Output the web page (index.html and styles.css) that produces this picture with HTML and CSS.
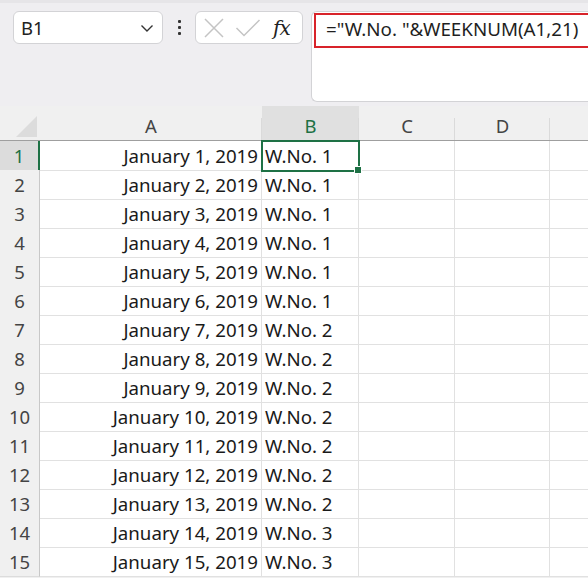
FILE: index.html
```html
<!DOCTYPE html>
<html>
<head>
<meta charset="utf-8">
<link rel="stylesheet" href="styles.css">
</head>
<body>
<div class="app">
  <div class="toolbar">
    <div class="namebox">
      <span class="ref">B1</span>
      <svg class="chev" width="14" height="10" viewBox="0 0 14 10"><path d="M1.5 2.5 L7 8 L12.5 2.5" fill="none" stroke="#333" stroke-width="1.4"/></svg>
    </div>
    <div class="dots"><i></i><i></i><i></i></div>
    <div class="fxbox">
      <svg class="ico" width="22" height="22" viewBox="0 0 22 22"><path d="M2 2 L20 20 M20 2 L2 20" stroke="#c4c4c4" stroke-width="1.5" fill="none"/></svg>
      <svg class="ico" width="26" height="22" viewBox="0 0 26 22"><path d="M1.5 11 L9 18.5 L24.5 3" stroke="#c4c4c4" stroke-width="1.5" fill="none"/></svg>
      <span class="fx">fx</span>
    </div>
    <div class="formula">
      <div class="hl">="W.No. "&amp;WEEKNUM(A1,21)</div>
    </div>
  </div>
  <div class="grid">
    <div class="corner"><span class="tri"></span></div>
    <div class="ch">A</div>
    <div class="ch sel">B</div>
    <div class="ch">C</div>
    <div class="ch">D</div>
    <div class="ch last"></div>
  </div>
  <div class="rows" id="rows"></div>
</div>
<script>
  var rows = [
    ["January 1, 2019","W.No. 1"],["January 2, 2019","W.No. 1"],["January 3, 2019","W.No. 1"],
    ["January 4, 2019","W.No. 1"],["January 5, 2019","W.No. 1"],["January 6, 2019","W.No. 1"],
    ["January 7, 2019","W.No. 2"],["January 8, 2019","W.No. 2"],["January 9, 2019","W.No. 2"],
    ["January 10, 2019","W.No. 2"],["January 11, 2019","W.No. 2"],["January 12, 2019","W.No. 2"],
    ["January 13, 2019","W.No. 2"],["January 14, 2019","W.No. 3"],["January 15, 2019","W.No. 3"]
  ];
  var html = "";
  rows.forEach(function(r, i){
    var s = i === 0;
    html += '<div class="row">' +
      '<div class="rh' + (s ? ' sel' : '') + '">' + (i+1) + '</div>' +
      '<div class="c a">' + r[0] + '</div>' +
      '<div class="c b' + (s ? ' active' : '') + '">' + r[1] + (s ? '<span class="handle"></span>' : '') + '</div>' +
      '<div class="c"></div><div class="c"></div><div class="c last"></div></div>';
  });
  document.getElementById("rows").innerHTML = html;
</script>
</body>
</html>
```
FILE: styles.css
```css
* { box-sizing: border-box; }
html, body { margin: 0; padding: 0; }
body {
  width: 588px; height: 578px; overflow: hidden;
  font-family: "Noto Sans", "Open Sans", sans-serif;
  color: #1f1f1f;
  background: #f0f0f0;
}
.app { width: 588px; height: 578px; overflow: hidden; }
.toolbar {
  height: 106px;
  background: #efeef1;
  border-top: 3px solid #e6e5e8;
  display: flex;
  align-items: flex-start;
  padding: 8px 0 0 13px;
  position: relative;
}
.namebox {
  width: 150px; height: 33px;
  background: #fff;
  border: 1px solid #d3d3d6;
  border-radius: 6px;
  display: flex; align-items: center; justify-content: space-between;
  padding: 0 8px 0 7px;
}
.ref { font-size: 18.5px; color: #222; }
.dots {
  width: 32px; height: 33px;
  display: flex; flex-direction: column; align-items: center; justify-content: center; gap: 3px;
}
.dots i { display: block; width: 3px; height: 3px; background: #333; border-radius: 1px; }
.fxbox {
  width: 108px; height: 33px;
  background: #fff;
  border: 1px solid #d3d3d6;
  border-radius: 6px;
  display: flex; align-items: center;
  padding: 0 0 0 7px;
  gap: 10px;
}
.fxbox .ico { flex: none; }
.fx {
  font-family: "DejaVu Serif", "Liberation Serif", serif;
  font-style: italic;
  font-size: 20px; color: #222;
  margin-left: 2px;
  letter-spacing: -1px;
}
.formula {
  margin-left: 8px;
  flex: 1;
  height: 91px;
  background: #fff;
  border: 1px solid #d3d3d6;
  border-right: none;
  border-radius: 6px 0 0 6px;
  padding: 1px 0 0 2px;
}
.hl {
  height: 35px;
  border: 2.5px solid #d8232a;
  border-right: none;
  font-size: 18.8px;
  color: #1f1f1f;
  padding: 2px 0 0 10px;
  white-space: nowrap;
  line-height: 25px;
}
.grid {
  display: grid;
  grid-template-columns: 40px 222px 97px 96px 95px 38px;
  height: 35px;
  background: #f0f0f0;
  border-bottom: 1px solid #9f9f9f;
}
.corner { position: relative; }
.tri {
  position: absolute; right: 3px; bottom: 3px;
  width: 0; height: 0;
  border-left: 21px solid transparent;
  border-bottom: 21px solid #dcdcdc;
}
.ch {
  position: relative;
  text-align: center;
  font-size: 18.5px;
  color: #444;
  line-height: 22px;
  padding-top: 9px;
}
.ch::after {
  content: ""; position: absolute; right: 0; bottom: 0;
  width: 1px; height: 22px; background: #dadada;
}
.ch.last::after { display: none; }
.ch.sel { background: #e0e0e0; color: #1e7145; }
.rows { background: #fff; }
.row {
  display: grid;
  grid-template-columns: 40px 222px 97px 96px 95px 38px;
  height: 29px;
}
.rh {
  background: #f0f0f0;
  border-right: 1px solid #c8c8c8;
  border-bottom: 1px solid #dcdcdc;
  text-align: center;
  font-size: 18.5px;
  color: #444;
  line-height: 29px;
}
.rh.sel { background: #dcdcdc; color: #1e7145; border-right: 2px solid #1e7145; }
.c {
  border-right: 1px solid #e1e1e1;
  border-bottom: 1px solid #e1e1e1;
  font-size: 18.7px;
  line-height: 29px;
  color: #1a1a1a;
  white-space: nowrap;
  position: relative;
}
.c.last { border-right: none; }
.c.a { text-align: right; padding-right: 3px; }
.c.b { padding-left: 3px; }
.c.active { outline: 2px solid #1e7145; outline-offset: -1px; z-index: 1; }
.handle {
  position: absolute; right: -4px; bottom: -4px;
  width: 6px; height: 6px; background: #1e7145;
  border: 1px solid #fff;
  box-sizing: content-box;
}
```
